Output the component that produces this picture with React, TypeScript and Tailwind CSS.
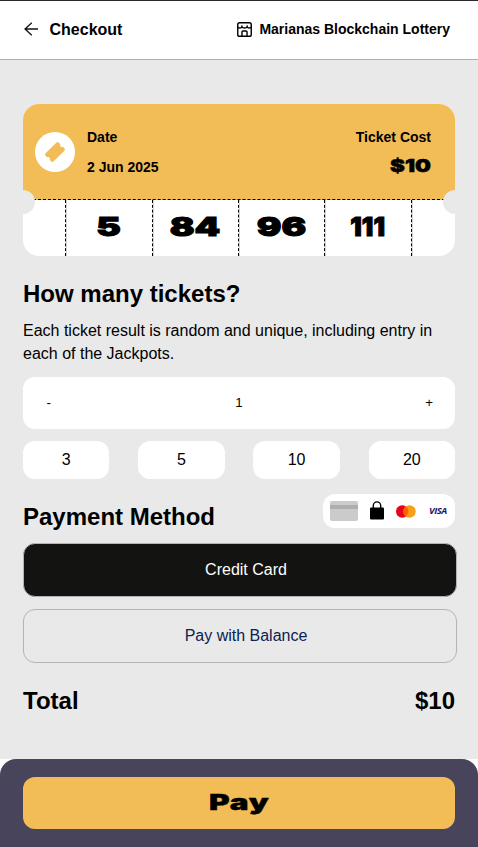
import type { ReactNode } from "react";

function Heavy({ children, className }: { children: ReactNode; className: string }) {
  return (
    <span
      className={`inline-block font-['Inter',sans-serif] font-black whitespace-nowrap ${className}`}
    >
      {children}
    </span>
  );
}

function StoreIcon() {
  return (
    <svg className="mt-px" width="15" height="15" viewBox="0 0 16 16" fill="none" stroke="#000" strokeWidth="1.5">
      <rect x="0.8" y="0.8" width="14.4" height="14.4" rx="2" />
      <path d="M1 5.2c.6 1.7 3.4 1.7 4.2-.2.8 1.9 4.8 1.9 5.6 0 .8 1.9 3.6 1.9 4.2.2M5.2 5V3.6M10.8 5V3.6" />
      <path d="M5.3 15V10.6a1 1 0 0 1 1-1h3.4a1 1 0 0 1 1 1V15" />
    </svg>
  );
}

function Header() {
  return (
    <header className="flex h-[60px] items-center justify-between border-t border-b border-t-[#2b292d] border-b-[#b0b0b0] bg-white pr-7 pb-0.5 pl-6">
      <div className="flex items-center">
        <svg width="15" height="14" viewBox="0 0 15 14" fill="none" stroke="#111" strokeWidth="1.3">
          <path d="M14 7H1M7.8.7 1 7l6.800 6.300" />
        </svg>
        <h1 className="ml-[10.500px] pt-0.5 text-[16px] leading-5 font-bold">Checkout</h1>
      </div>
      <div className="flex items-center gap-[7px]">
        <StoreIcon />
        <span className="text-[14px] leading-5 font-bold">Marianas Blockchain Lottery</span>
      </div>
    </header>
  );
}

const numbers = [
  { value: "5", shape: "scale-x-[1.42]" },
  { value: "84", shape: "scale-x-[1.41]" },
  { value: "96", shape: "scale-x-[1.41]" },
  { value: "111", shape: "scale-x-[0.98]" },
];

function Ticket() {
  return (
    <section className="relative flex h-[152px] flex-col overflow-hidden rounded-2xl bg-white">
      <div className="flex h-24 items-center border-b border-dashed border-black bg-[#f2bc57] pr-6 pl-3">
        <div className="flex size-10 items-center justify-center rounded-full bg-white">
          <svg width="22" height="22" viewBox="0 0 22 22" fill="#f2bc57">
            <path
              transform="rotate(-45 11 11)"
              d="M3.500 5.300h15a1.800 1.800 0 0 1 1.800 1.800v2a2 2 0 0 0 0 3.800v2a1.800 1.800 0 0 1-1.800 1.800h-15a1.800 1.800 0 0 1-1.800-1.800v-2a2 2 0 0 0 0-3.800v-2a1.800 1.800 0 0 1 1.800-1.800z"
            />
          </svg>
        </div>
        <div className="ml-3 flex flex-1 flex-col gap-2.5 text-[14px] leading-5 font-bold">
          <span>Date</span>
          <span>2 Jun 2025</span>
        </div>
        <div className="flex flex-col items-end gap-2.5 text-[14px] leading-5 font-bold">
          <span>Ticket Cost</span>
          <Heavy className="mb-[3px] origin-right scale-x-[1.24] text-[18px] leading-[17px] [-webkit-text-stroke:0.5px_#000]">
            $10
          </Heavy>
        </div>
      </div>
      <div className="grid flex-1 grid-cols-[1fr_2fr_2fr_2fr_2fr_1fr]">
        <div className="border-r border-dashed border-black shadow-[1px_0_0_#d4d4d4]" />
        {numbers.map(({ value, shape }) => (
          <div
            key={value}
            className="flex justify-center border-r border-dashed border-black pt-[13px] shadow-[1px_0_0_#d4d4d4]"
          >
            <Heavy className={`text-[26px] leading-7 [-webkit-text-stroke:1px_#000] ${shape}`}>
              {value}
            </Heavy>
          </div>
        ))}
        <div />
      </div>
      <div className="absolute top-[86px] -left-3 size-6 rounded-full bg-[#e9e9e9]" />
      <div className="absolute top-[86px] -right-3 size-6 rounded-full bg-[#e9e9e9]" />
    </section>
  );
}

function CardBrands() {
  return (
    <div className="flex h-[34px] w-[132px] items-center rounded-xl bg-white pl-[7px]">
      <svg width="28" height="20" viewBox="0 0 28 20">
        <rect width="28" height="20" rx="2" fill="#cbcbcb" />
        <rect y="4" width="28" height="4" fill="#aeaeae" />
      </svg>
      <svg className="ml-3" width="14" height="20" viewBox="0 0 14 20">
        <rect y="6.500" width="14" height="12" rx="1" />
        <path d="M3.300 8V4.600a3.700 3.700 0 0 1 7.400 0v3.400" fill="none" stroke="#000" strokeWidth="1.400" />
      </svg>
      <svg className="ml-3" width="20" height="13" viewBox="0 0 20 13">
        <circle cx="6.200" cy="6.500" r="6.200" fill="#eb001b" />
        <circle cx="13.500" cy="6.500" r="6.200" fill="#f79e1b" />
        <path d="M9.850 1.500a6.200 6.200 0 0 1 0 10a6.200 6.200 0 0 1 0-10" fill="#ff5f00" />
      </svg>
      <span className="ml-[13px] w-[20px] font-['Open_Sans',sans-serif] text-[9.500px] leading-3 font-bold tracking-[-0.45px] text-[#1a1a6c] italic">
        VISA
      </span>
    </div>
  );
}

export default function App() {
  return (
    <div className="flex h-[847px] w-[478px] flex-col bg-white font-['Liberation_Sans',Arial,sans-serif] text-black">
      <Header />
      <main className="flex flex-1 flex-col bg-[#e9e9e9] px-[23px] pt-11">
        <Ticket />
        <h2 className="mt-[22px] text-[24px] leading-8 font-bold">How many tickets?</h2>
        <p className="mt-[9px] text-[16px] leading-[23px]">
          Each ticket result is random and unique, including entry in each of the Jackpots.
        </p>
        <div className="mt-3 grid h-[52px] grid-cols-[1fr_auto_1fr] items-center rounded-xl bg-white px-[22px] text-[13.333px]">
          <button className="justify-self-start pl-[1.500px]">-</button>
          <span>1</span>
          <button className="justify-self-end">+</button>
        </div>
        <div className="mt-3 flex justify-between">
          {[3, 5, 10, 20].map((n) => (
            <button key={n} className="h-[38px] w-[86.400px] rounded-xl bg-white text-[16px]">
              {n}
            </button>
          ))}
        </div>
        <div className="mt-[15px] flex justify-between">
          <h2 className="mt-[7px] text-[24px] leading-8 font-bold">Payment Method</h2>
          <CardBrands />
        </div>
        <button className="mt-2.5 h-[54px] w-[434px] shrink-0 rounded-xl border border-[#b4b4b4] bg-[#131311] pl-3 text-[16px] text-white">
          Credit Card
        </button>
        <button className="mt-3 h-[54px] w-[434px] shrink-0 rounded-xl border border-[#b4b4b4] pl-3 text-[16px] text-[#0b2253]">
          Pay with Balance
        </button>
        <div className="mt-[22px] flex justify-between text-[24px] leading-8 font-bold">
          <span>Total</span>
          <span>$10</span>
        </div>
      </main>
      <footer className="h-[88px] rounded-t-2xl bg-[#48445b] px-[23px] pt-[18px]">
        <button className="flex h-[52px] w-full items-center justify-center rounded-xl bg-[#f2bc57] pb-[3px]">
          <Heavy className="scale-x-[1.43] text-[22px] leading-7 tracking-[0.6px] [-webkit-text-stroke:0.4px_#000]">
            Pay
          </Heavy>
        </button>
      </footer>
    </div>
  );
}
